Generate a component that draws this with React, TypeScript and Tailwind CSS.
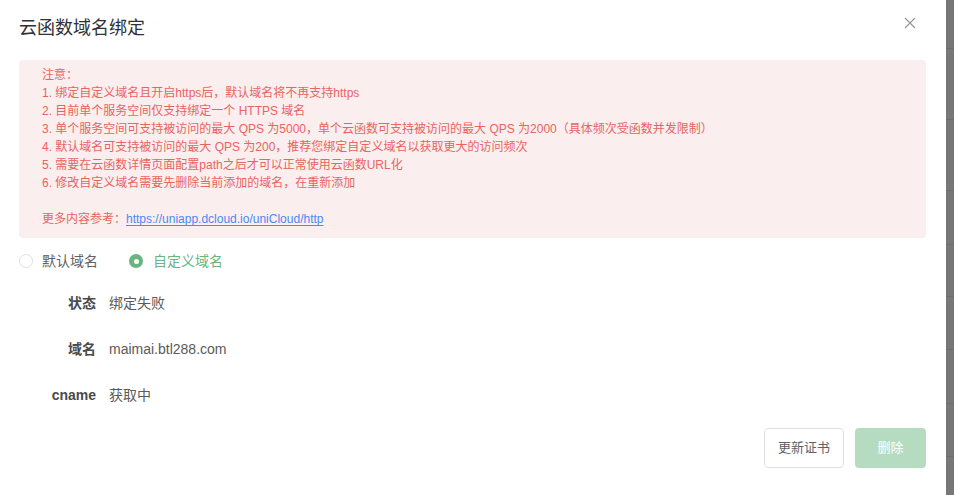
const notes = [
  '1. 绑定自定义域名且开启https后，默认域名将不再支持https',
  '2. 目前单个服务空间仅支持绑定一个 HTTPS 域名',
  '3. 单个服务空间可支持被访问的最大 QPS 为5000，单个云函数可支持被访问的最大 QPS 为2000（具体频次受函数并发限制）',
  '4. 默认域名可支持被访问的最大 QPS 为200，推荐您绑定自定义域名以获取更大的访问频次',
  '5. 需要在云函数详情页面配置path之后才可以正常使用云函数URL化',
  '6. 修改自定义域名需要先删除当前添加的域名，在重新添加',
];

const rows = [
  { label: '状态', value: '绑定失败' },
  { label: '域名', value: 'maimai.btl288.com' },
  { label: 'cname', value: '获取中' },
];

export default function App() {
  return (
    <div
      className="flex w-[954px] h-[495px] overflow-hidden bg-white"
      style={{ fontFamily: '"Liberation Sans", "Noto Sans CJK SC", sans-serif' }}
    >
      {/* dialog */}
      <div className="w-[946px] h-full flex flex-col bg-white">
        <div className="flex items-center justify-between h-[60px] pl-[19px] pr-[30px]">
          <h2 className="text-[18px] text-[#303133] leading-none -mt-[4px]">云函数域名绑定</h2>
          <svg width="12" height="12" viewBox="0 0 12 12" className="text-[#909399] -mt-[14px]">
            <path d="M1 1 L11 11 M11 1 L1 11" stroke="currentColor" strokeWidth="1.1" />
          </svg>
        </div>

        <div className="mx-[19px] w-[907px] rounded-[4px] bg-[#fbeeee] pl-[23px] pr-4 pt-[6px] pb-[10px] text-[12px] leading-[18px] text-[#e8645f]">
          <p>注意：</p>
          {notes.map((n) => (
            <p key={n}>{n}</p>
          ))}
          <p className="h-[18px]"></p>
          <p>
            更多内容参考：
            <a className="text-[#4a8af4] underline underline-offset-2">https://uniapp.dcloud.io/uniCloud/http</a>
          </p>
        </div>

        <div className="flex items-center gap-[31px] pl-[19px] mt-[13px] text-[14px] leading-[20px]">
          <label className="flex items-center gap-[9px] text-[#606266]">
            <span className="w-[14px] h-[14px] rounded-full border border-[#dcdfe6] bg-white" />
            默认域名
          </label>
          <label className="flex items-center gap-[10px] text-[#68b57f]">
            <span className="w-[14px] h-[14px] rounded-full bg-[#68b57f] flex items-center justify-center">
              <span className="w-[5px] h-[5px] rounded-full bg-white" />
            </span>
            自定义域名
          </label>
        </div>

        <div className="flex flex-col gap-[26px] pl-[19px] mt-[22px] text-[14px] leading-[20px]">
          {rows.map((r) => (
            <div key={r.label} className="flex items-center">
              <span className="w-[77px] text-right font-bold text-[#4a4a4a]">{r.label}</span>
              <span className="ml-[13px] text-[#5a5a5a]">{r.value}</span>
            </div>
          ))}
        </div>

        <div className="flex justify-end gap-[11px] pr-[20px] mt-[23px]">
          <button className="w-[80px] h-[40px] rounded-[4px] border border-[#dcdfe6] bg-white text-[13px] text-[#606266]">
            更新证书
          </button>
          <button className="w-[71px] h-[40px] rounded-[4px] bg-[#b5dbc1] text-[13px] text-white">
            删除
          </button>
        </div>
      </div>

      {/* overlay strip */}
      <div className="w-[8px] h-full bg-[#777777] flex flex-col">
        <div className="h-[49px] border-b border-[#6d6d6d]" />
        <div className="h-[71px] border-b border-[#6d6d6d]" />
        <div className="h-[71px] border-b border-[#6d6d6d]" />
        <div className="h-[54px] border-b border-[#6d6d6d]" />
        <div className="h-[52px] border-b border-[#6d6d6d]" />
        <div className="h-[53px] border-b border-[#6d6d6d]" />
        <div className="h-[54px] border-b border-[#6d6d6d]" />
        <div className="h-[53px] border-b border-[#6d6d6d]" />
      </div>
    </div>
  );
}
